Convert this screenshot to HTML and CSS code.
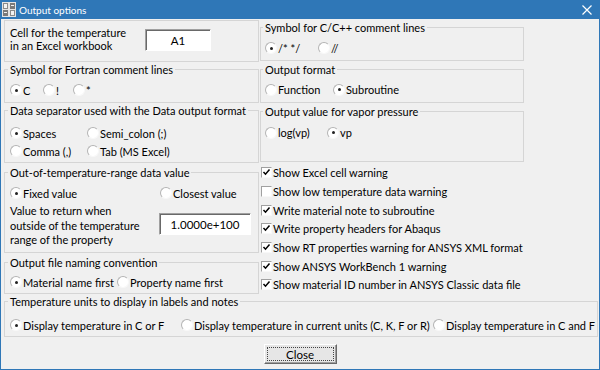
FILE: index.html
```html
<!DOCTYPE html>
<html lang="en">
<head>
    <meta charset="UTF-8">
    <title>Output options</title>
    <link rel="stylesheet" href="styles.css">
</head>
<body>
    <div class="window">
        <div class="titlebar">
            <svg class="app-icon" width="14" height="15" viewBox="0 0 14 15">
                <rect x="0" y="0" width="14" height="15" fill="#e4e4e4"/>
                <rect x="1" y="1" width="5" height="6" fill="#8a8a8a"/>
                <rect x="2" y="2" width="3" height="4" fill="#f2f2f2"/>
                <rect x="8" y="1" width="5" height="6" fill="#7a7a7a"/>
                <rect x="9" y="3" width="3" height="1" fill="#f2f2f2"/>
                <rect x="1" y="8" width="5" height="6" fill="#7a7a7a"/>
                <rect x="2" y="10" width="3" height="1" fill="#f2f2f2"/>
                <rect x="8" y="8" width="5" height="6" fill="#8a8a8a"/>
                <rect x="9" y="9" width="3" height="4" fill="#f2f2f2"/>
            </svg>
            <span class="title">Output options</span>
            <svg class="close-x" width="10" height="10" viewBox="0 0 10 10">
                <path d="M0.5 0.5 L9.5 9.5 M9.5 0.5 L0.5 9.5" stroke="#fff" stroke-width="1.2"/>
            </svg>
        </div>

        <div class="content">
            <div class="columns">
                <div class="col col-left">
                    <div class="group g-cell">
                        <div class="cell-label">Cell for the temperature<br>in an Excel workbook</div>
                        <div class="field field-cell">A1</div>
                    </div>

                    <div class="group g-fortran">
                        <div class="legend">Symbol for Fortran comment lines</div>
                        <div class="opts">
                            <span class="opt w33"><span class="radio on"></span>C</span>
                            <span class="opt w30"><span class="radio"></span>!</span>
                            <span class="opt"><span class="radio"></span>*</span>
                        </div>
                    </div>

                    <div class="group g-sep">
                        <div class="legend">Data separator used with the Data output format</div>
                        <div class="opts opts-tall first">
                            <span class="opt w77"><span class="radio on"></span>Spaces</span>
                            <span class="opt"><span class="radio"></span>Semi_colon (;)</span>
                        </div>
                        <div class="opts opts-tall">
                            <span class="opt w77"><span class="radio"></span>Comma (,)</span>
                            <span class="opt"><span class="radio"></span>Tab (MS Excel)</span>
                        </div>
                    </div>

                    <div class="group g-range">
                        <div class="legend">Out-of-temperature-range data value</div>
                        <div class="opts">
                            <span class="opt w150"><span class="radio on"></span>Fixed value</span>
                            <span class="opt"><span class="radio"></span>Closest value</span>
                        </div>
                        <div class="range-row">
                            <div class="range-label">Value to return when<br>outside of the temperature<br>range of the property</div>
                            <div class="field field-range">1.0000e+100</div>
                        </div>
                    </div>

                    <div class="group g-name">
                        <div class="legend">Output file naming convention</div>
                        <div class="opts">
                            <span class="opt w107"><span class="radio on"></span>Material name first</span>
                            <span class="opt"><span class="radio"></span>Property name first</span>
                        </div>
                    </div>
                </div>

                <div class="col col-right">
                    <div class="group g-cpp">
                        <div class="legend">Symbol for C/C++ comment lines</div>
                        <div class="opts">
                            <span class="opt w53"><span class="radio on"></span>/* */</span>
                            <span class="opt"><span class="radio"></span>//</span>
                        </div>
                    </div>

                    <div class="group g-format">
                        <div class="legend">Output format</div>
                        <div class="opts">
                            <span class="opt w68"><span class="radio"></span>Function</span>
                            <span class="opt"><span class="radio on"></span>Subroutine</span>
                        </div>
                    </div>

                    <div class="group g-vapor">
                        <div class="legend">Output value for vapor pressure</div>
                        <div class="opts">
                            <span class="opt w62"><span class="radio"></span>log(vp)</span>
                            <span class="opt"><span class="radio on"></span>vp</span>
                        </div>
                    </div>

                    <div class="checks">
                        <div class="check-row"><span class="box"><svg width="9" height="9" viewBox="0 0 9 9"><path d="M1.5 4 L3.5 6.2 L7.5 1.5" stroke="#000" stroke-width="1.5" fill="none"/></svg></span>Show Excel cell warning</div>
                        <div class="check-row"><span class="box"></span>Show low temperature data warning</div>
                        <div class="check-row"><span class="box"><svg width="9" height="9" viewBox="0 0 9 9"><path d="M1.5 4 L3.5 6.2 L7.5 1.5" stroke="#000" stroke-width="1.5" fill="none"/></svg></span>Write material note to subroutine</div>
                        <div class="check-row"><span class="box"><svg width="9" height="9" viewBox="0 0 9 9"><path d="M1.5 4 L3.5 6.2 L7.5 1.5" stroke="#000" stroke-width="1.5" fill="none"/></svg></span>Write property headers for Abaqus</div>
                        <div class="check-row"><span class="box"><svg width="9" height="9" viewBox="0 0 9 9"><path d="M1.5 4 L3.5 6.2 L7.5 1.5" stroke="#000" stroke-width="1.5" fill="none"/></svg></span>Show RT properties warning for ANSYS XML format</div>
                        <div class="check-row"><span class="box"><svg width="9" height="9" viewBox="0 0 9 9"><path d="M1.5 4 L3.5 6.2 L7.5 1.5" stroke="#000" stroke-width="1.5" fill="none"/></svg></span>Show ANSYS WorkBench 1 warning</div>
                        <div class="check-row"><span class="box"><svg width="9" height="9" viewBox="0 0 9 9"><path d="M1.5 4 L3.5 6.2 L7.5 1.5" stroke="#000" stroke-width="1.5" fill="none"/></svg></span>Show material ID number in ANSYS Classic data file</div>
                    </div>
                </div>
            </div>

            <div class="group g-units">
                <div class="legend">Temperature units to display in labels and notes</div>
                <div class="opts">
                    <span class="opt w171"><span class="radio on"></span>Display temperature in C or F</span>
                    <span class="opt w252"><span class="radio"></span>Display temperature in current units (C, K, F or R)</span>
                    <span class="opt"><span class="radio"></span>Display temperature in C and F</span>
                </div>
            </div>

            <div class="footer">
                <button class="btn">Close</button>
            </div>
        </div>
    </div>
</body>
</html>
```

FILE: styles.css
```css
* {
    box-sizing: border-box;
}

body {
    margin: 0;
    font-family: Lato, "Noto Sans", sans-serif;
    font-size: 11px;
    color: #000;
    background: #f0f0f0;
}

.window {
    width: 600px;
    height: 370px;
    background: #f0f0f0;
    border: 1px solid #2f77b7;
    border-top: 0;
    display: flex;
    flex-direction: column;
}

/* title bar */
.titlebar {
    height: 19px;
    flex: none;
    background: #2f77b7;
    color: #fff;
    display: flex;
    align-items: center;
    padding: 0 0 0 2px;
    margin: 0 -1px;
}

.app-icon {
    margin-right: 3px;
}

.title {
    flex: 1;
    font-size: 10px;
}

.close-x {
    margin-right: 8px;
}

/* body */
.content {
    flex: 1;
    padding: 0 1px 0 3px;
    display: flex;
    flex-direction: column;
}

.columns {
    height: 275px;
    display: flex;
    gap: 1px;
}

.col {
    display: flex;
    flex-direction: column;
}

.col-left {
    width: 255px;
}

.col-right {
    width: 264px;
}

.group {
    border: 1px solid #d5d5d5;
    padding: 0 4px 0 5px;
}

.col-right .group {
    padding-left: 4px;
}

.legend {
    display: table;
    margin: -8px 0 0 -2px;
    padding: 0 2px;
    line-height: 15px;
    background: #f0f0f0;
    white-space: nowrap;
}

.opts {
    display: flex;
    align-items: center;
    height: 16px;
    margin-top: 5px;
    white-space: nowrap;
}

.opts-tall {
    height: 18px;
    margin-top: 0;
}

.opts-tall.first {
    margin-top: 6px;
}

.opt {
    display: flex;
    align-items: center;
    flex: none;
}

.w30 { width: 30px; }
.w33 { width: 33px; }
.w53 { width: 53px; }
.w62 { width: 62px; }
.w68 { width: 68px; }
.w77 { width: 77px; }
.w107 { width: 107px; }
.w150 { width: 150px; }
.w171 { width: 171px; }
.w252 { width: 252px; }

.radio {
    width: 12px;
    height: 12px;
    border-radius: 50%;
    background: #fff;
    border: 1px solid;
    border-color: #b4b4b4 #f8f8f8 #f8f8f8 #b4b4b4;
    margin-right: 1px;
    display: flex;
    align-items: center;
    justify-content: center;
    flex: none;
}

.radio.on::after {
    content: "";
    width: 3px;
    height: 3px;
    border-radius: 50%;
    background: #222;
}

/* sunken edit fields */
.field {
    background: #fff;
    border: 1px solid;
    border-color: #a0a0a0 #fff #fff #a0a0a0;
    box-shadow: inset 1px 1px 0 #696969;
    display: flex;
    align-items: center;
    justify-content: center;
    height: 22px;
    font-size: 11.5px;
}

/* left column groups */
.g-cell {
    margin-top: 1px;
    height: 42px;
    display: flex;
    align-items: flex-start;
}

.cell-label {
    width: 135px;
    line-height: 13px;
    padding-top: 5px;
    white-space: nowrap;
}

.field-cell {
    width: 66px;
    margin-top: 8px;
}

.g-fortran {
    margin-top: 7px;
    height: 34px;
}

.g-sep {
    margin-top: 7px;
    height: 53px;
}

.g-range {
    margin-top: 9px;
    height: 81px;
}

.range-row {
    display: flex;
    align-items: flex-start;
}

.range-label {
    width: 149px;
    line-height: 14.5px;
    margin-top: 3px;
    white-space: nowrap;
}

.field-range {
    width: 92px;
    margin-top: 12px;
}

.g-name {
    margin-top: 9px;
    height: 32px;
}

.g-name .opts {
    margin-top: 4px;
}

/* right column groups */
.g-cpp {
    margin-top: 8px;
    height: 34px;
}

.g-format {
    margin-top: 8px;
    height: 34px;
}

.g-vapor {
    margin-top: 8px;
    height: 52px;
}

.g-vapor .opts {
    margin-top: 6px;
}

.checks {
    padding-top: 1px;
}

.check-row {
    height: 18.67px;
    display: flex;
    align-items: center;
    white-space: nowrap;
}

.box {
    width: 11px;
    height: 11px;
    margin: 0 1px 0 1px;
    background: #fff;
    border: 1px solid;
    border-color: #a0a0a0 #f8f8f8 #f8f8f8 #a0a0a0;
    display: flex;
    align-items: center;
    justify-content: center;
    flex: none;
}

/* bottom */
.g-units {
    margin-top: 7px;
    height: 36px;
}

.g-units .opts {
    margin-top: 8px;
}

.footer {
    display: flex;
    justify-content: center;
    margin-top: 7px;
    padding-right: 2px;
}

.btn {
    width: 73px;
    height: 20px;
    font-family: inherit;
    font-size: 11.5px;
    color: #000;
    background: #e6e6e6;
    border: 1px solid;
    border-color: #fff #696969 #696969 #fff;
    box-shadow: inset -1px -1px 0 #a0a0a0;
    outline: 1px dotted #444;
    outline-offset: -4px;
    padding: 0;
}
```
